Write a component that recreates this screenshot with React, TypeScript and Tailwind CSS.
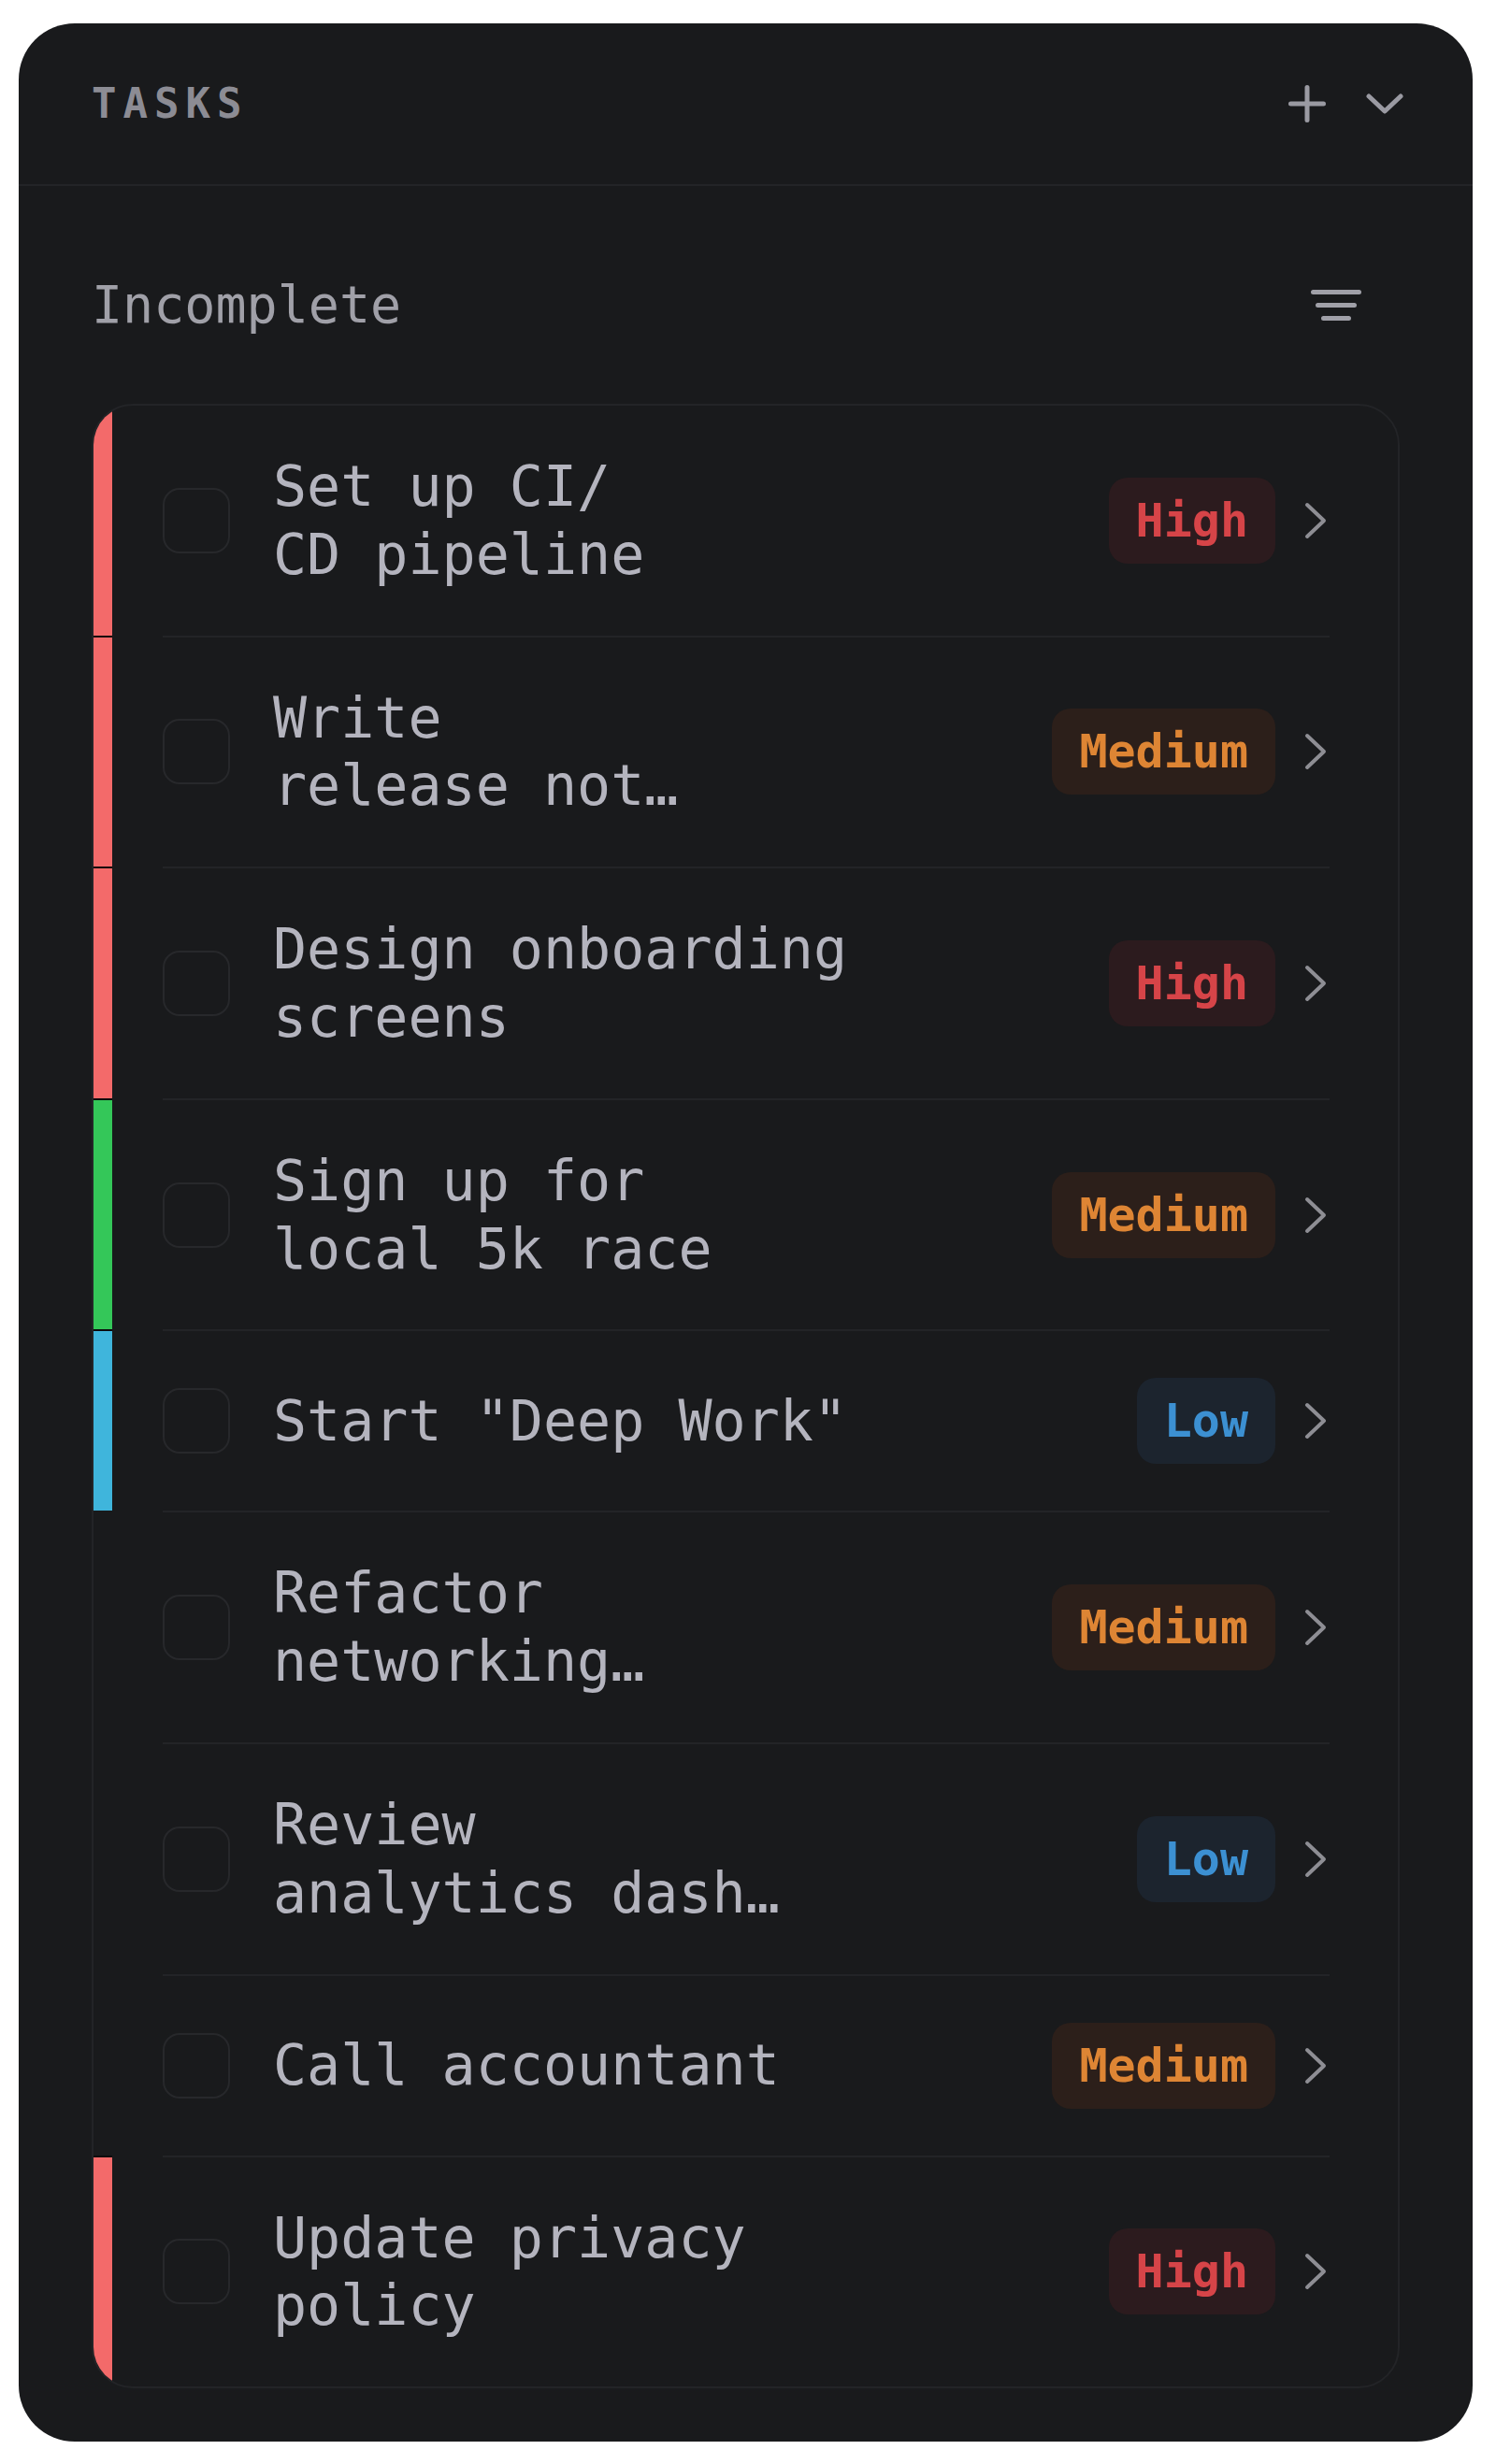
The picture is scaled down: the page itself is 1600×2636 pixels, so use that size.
import React from "react";

type Priority = "High" | "Medium" | "Low";

const tasks: { lines: string[]; priority: Priority; bar: string | null }[] = [
  { lines: ["Set up CI/", "CD pipeline"], priority: "High", bar: "bg-[#f36a6a]" },
  { lines: ["Write", "release not…"], priority: "Medium", bar: "bg-[#f36a6a]" },
  { lines: ["Design onboarding", "screens"], priority: "High", bar: "bg-[#f36a6a]" },
  { lines: ["Sign up for", "local 5k race"], priority: "Medium", bar: "bg-[#34c759]" },
  { lines: ['Start "Deep Work"'], priority: "Low", bar: "bg-[#3fb5dc]" },
  { lines: ["Refactor", "networking…"], priority: "Medium", bar: null },
  { lines: ["Review", "analytics dash…"], priority: "Low", bar: null },
  { lines: ["Call accountant"], priority: "Medium", bar: null },
  { lines: ["Update privacy", "policy"], priority: "High", bar: "bg-[#f36a6a]" },
];

const badgeStyle: Record<Priority, string> = {
  High: "bg-[#2c1b1e] text-[#d64448]",
  Medium: "bg-[#2c1f1a] text-[#de8534]",
  Low: "bg-[#1c242e] text-[#3c90d2]",
};

function PlusIcon() {
  return (
    <svg width="40" height="40" viewBox="0 0 40 40" fill="none">
      <path d="M20 2.5V37.5M2.5 20H37.5" stroke="#9a9aa2" strokeWidth="5" strokeLinecap="round" />
    </svg>
  );
}

function ChevronDown() {
  return (
    <svg width="40" height="22" viewBox="0 0 40 22" fill="none">
      <path d="M3 3L20 19L37 3" stroke="#9a9aa2" strokeWidth="5" strokeLinecap="round" strokeLinejoin="round" />
    </svg>
  );
}

function FilterIcon() {
  return (
    <svg width="54" height="33" viewBox="0 0 54 33" fill="none">
      <path
        d="M2.5 2.5H51.5M7.5 16.5H46.5M13.5 30.5H40.5"
        stroke="#a0a0a8"
        strokeWidth="5"
        strokeLinecap="round"
      />
    </svg>
  );
}

function ChevronRight() {
  return (
    <svg width="27" height="40" viewBox="0 0 27 40" fill="none">
      <path d="M3 3L21 20L3 37" stroke="#8e8e94" strokeWidth="4" strokeLinecap="round" strokeLinejoin="round" />
    </svg>
  );
}

export default function App() {
  return (
    <div
      className="min-h-[2636px] bg-white pt-[25px] pl-[20px]"
      style={{ fontFamily: '"DejaVu Sans Mono", "Liberation Mono", monospace' }}
    >
      <div className="w-[1555px] rounded-[60px] bg-[#191a1c] overflow-hidden pb-[57px]">
        <div className="h-[172px] flex items-center justify-between pl-[78px] pr-[74px]">
          <span className="text-[44px] font-bold tracking-[7px] leading-none text-[#8c8c94]">TASKS</span>
          <div className="flex items-center gap-[43px]">
            <PlusIcon />
            <ChevronDown />
          </div>
        </div>
        <div className="h-[2px] bg-[#232427]" />
        <div className="px-[78px]">
          <div className="pt-[99px]">
            <div className="h-[56px] flex items-center justify-between">
              <span className="text-[55px] leading-none text-[#a0a0a8]">Incomplete</span>
              <div className="mr-[41px] flex items-center">
                <FilterIcon />
              </div>
            </div>
          </div>
          <div className="mt-[78px] rounded-[44px] border-2 border-[#232427] overflow-hidden">
            {tasks.map((t, i) => (
              <div key={i} className="flex">
                <div
                  className={`w-[20px] shrink-0 ${t.bar ?? ""} ${
                    t.bar && i > 0 ? "border-t-2 border-[#0b0b0c]" : ""
                  }`}
                />
                <div
                  className={`flex-1 ml-[54px] mr-[73px] flex items-center py-[50px] ${
                    i > 0 ? "border-t-2 border-[#232427]" : ""
                  }`}
                >
                  <div className="w-[72px] h-[70px] shrink-0 rounded-[18px] border-2 border-[#27282b]" />
                  <div className="ml-[46px] flex-1 text-[60px] leading-[72.8px] text-[#b4b4be]">
                    {t.lines.map((l, j) => (
                      <div key={j} className="whitespace-pre">
                        {l}
                      </div>
                    ))}
                  </div>
                  <div
                    className={`h-[92px] px-[29px] flex items-center rounded-[20px] text-[50px] font-bold leading-none ${
                      badgeStyle[t.priority]
                    }`}
                  >
                    {t.priority}
                  </div>
                  <div className="ml-[31px] flex items-center">
                    <ChevronRight />
                  </div>
                </div>
              </div>
            ))}
          </div>
        </div>
      </div>
    </div>
  );
}
